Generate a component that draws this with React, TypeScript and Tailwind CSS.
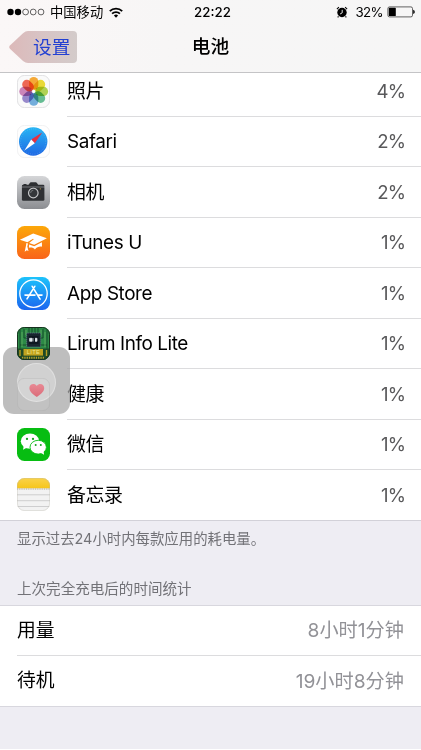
import type { ReactNode } from "react";

const PETALS = [
  "#f9a21c",
  "#ecd91c",
  "#a9d03c",
  "#52b788",
  "#62a6dc",
  "#8c7cc8",
  "#c878b4",
  "#f0553f",
];

const PhotosIcon = () => (
  <svg viewBox="0 0 33 33" className="size-[33px]">
    <rect x=".4" y=".4" width="32.2" height="32.2" rx="7.2" fill="#fafafa" stroke="#d9d9dc" strokeWidth=".8" />
    {PETALS.map((color, i) => (
      <rect
        key={color}
        x="12.1"
        y="2"
        width="9.2"
        height="12.8"
        rx="4.6"
        fill={color}
        fillOpacity=".88"
        className="mix-blend-multiply"
        transform={`rotate(${i * 45} 16.7 16.4)`}
      />
    ))}
    <circle cx="16.7" cy="16.4" r="1.1" fill="#fff" />
  </svg>
);

const SafariIcon = () => (
  <svg viewBox="0 0 33 33" className="size-[33px]">
    <defs>
      <linearGradient id="safari" x1="0" y1="0" x2="0" y2="1">
        <stop offset="0" stopColor="#26b5f4" />
        <stop offset="1" stopColor="#1f68e4" />
      </linearGradient>
    </defs>
    <rect x=".4" y=".4" width="32.2" height="32.2" rx="7.2" fill="#fefefe" stroke="#ebebed" strokeWidth=".7" />
    <circle cx="16.2" cy="16.5" r="14.2" fill="url(#safari)" />
    <circle cx="16.2" cy="16.5" r="12.6" fill="none" stroke="#a4d7fa" strokeWidth="1" strokeDasharray=".4 1.8" opacity=".6" />
    <path d="M25.2 7.6 14.2 14.6l3.6 3.6z" fill="#e8303f" />
    <path d="m14.2 14.6 3.6 3.6L7.4 25.4z" fill="#fff" />
  </svg>
);

const CameraIcon = () => (
  <svg viewBox="0 0 33 33" className="size-[33px]">
    <defs>
      <linearGradient id="camera" x1="0" y1="0" x2="0" y2="1">
        <stop offset="0" stopColor="#d5d6d8" />
        <stop offset="1" stopColor="#8b8d91" />
      </linearGradient>
    </defs>
    <rect width="33" height="33" rx="7.5" fill="url(#camera)" />
    <path d="M6.5 7.9h3v1h-3zM11.5 8.8l1.3-1.9q.4-.6 1.1-.6h4.9q.7 0 1.1.6l1.3 1.9H26q1.4 0 1.4 1.2v.7H4.9V10q0-1.2 1.4-1.2z" fill="#2e3033" />
    <path d="M4.9 11.2h22.5v12.2q0 1.3-1.3 1.3H6.2q-1.3 0-1.3-1.3z" fill="#2e3033" />
    <circle cx="16.3" cy="16.8" r="5.9" fill="#2e3033" />
    <circle cx="16.3" cy="17" r="4.8" fill="#34373a" stroke="#c4c5c7" strokeWidth="1.2" />
    <path d="M13.6 17a2.7 2.7 0 0 1 2.7-2.7" fill="none" stroke="#8d9094" strokeWidth=".7" />
    <circle cx="23.3" cy="12.8" r=".6" fill="#c9a44a" />
  </svg>
);

const ITunesUIcon = () => (
  <svg viewBox="0 0 33 33" className="size-[33px]">
    <defs>
      <linearGradient id="itunesu" x1="0" y1="0" x2="0" y2="1">
        <stop offset="0" stopColor="#fca809" />
        <stop offset="1" stopColor="#f9641a" />
      </linearGradient>
    </defs>
    <rect width="33" height="33" rx="7.5" fill="url(#itunesu)" />
    <path d="m2.9 13.7 13.3-6.3 13.7 4.9-12.7 6.5-5.1-1.8 4.7-3.7-.8-.5-5.6 3.5z" fill="#fff" />
    <path d="m9.4 17 1.6.6-.7 2.8 1.2 4.5-1.8-.6-2 1.4 1.2-5.6z" fill="#fff" />
    <path d="m12.1 18.4 5.1 1.8 7.7-3.9.1 4.4c-2.5-.4-5.2.3-7.1 2.7-1.4-1.6-3.6-2.2-6-1.6z" fill="#fff" />
  </svg>
);

const AppStoreIcon = () => (
  <svg viewBox="0 0 33 33" className="size-[33px]">
    <defs>
      <linearGradient id="appstore" x1="0" y1="0" x2="0" y2="1">
        <stop offset="0" stopColor="#1dc3fb" />
        <stop offset="1" stopColor="#1b65ef" />
      </linearGradient>
    </defs>
    <rect width="33" height="33" rx="7.5" fill="url(#appstore)" />
    <circle cx="16.5" cy="16.6" r="13.7" fill="none" stroke="#fff" strokeWidth="1.3" />
    <g fill="none" stroke="#fff" strokeWidth="1.6" strokeLinecap="round">
      <path d="m15.2 9.3 7.9 12.8M17.8 9.3 10 21.8M8 18.1h10M21.4 18.1h3.6" />
    </g>
  </svg>
);

const LirumIcon = () => (
  <svg viewBox="0 0 33 33" className="relative z-30 size-[33px]">
    <defs>
      <clipPath id="lirum">
        <rect width="33" height="33" rx="7.5" />
      </clipPath>
    </defs>
    <g clipPath="url(#lirum)">
      <rect width="33" height="33" fill="#2c8a46" />
      <g fill="none" stroke="#154d2b" strokeWidth="1">
        <path d="M3 3v20h5M30 3v20h-5M7 2v9h4M26 2v9h-4M12 0v6M15 0v6M18 0v6M21 0v6M3 18h6M24 18h6" />
      </g>
      <path d="M5 5v15M28 5v15M9 3v5M24 3v5" stroke="#64ae62" strokeWidth=".8" />
      <rect x="9.7" y="6" width="14" height="14" rx="1" fill="#18252e" stroke="#668090" strokeWidth="1" strokeDasharray="1 1" />
      <rect x="12" y="9" width="9.5" height="8" fill="#0e1720" />
      <path d="M15 11.3h-2.4v3H15zM16 11v3.5M18 11.3h2v3h-2" stroke="#e8edf0" strokeWidth=".7" fill="#dbe3e8" />
      <rect y="21.5" width="33" height="11.5" fill="#1f4a26" />
      <rect x="6.5" y="22" width="19.5" height="6.6" fill="#c0a31f" />
      <path d="M3 23v6M29.5 23v6" stroke="#b59c22" strokeWidth="1.4" />
      <path d="M5 30.7h23" stroke="#b7a02b" strokeWidth="2.1" strokeDasharray="1.3 1" />
      <text x="16.5" y="27.3" textAnchor="middle" fontSize="5.6" letterSpacing=".4" fill="#f4e787" fontFamily="Liberation Sans, sans-serif">
        LITE
      </text>
    </g>
    <rect x=".5" y=".5" width="32" height="32" rx="7" fill="none" stroke="#17301f" />
  </svg>
);

const HealthIcon = () => (
  <svg viewBox="0 0 33 33" className="relative z-30 size-[33px]">
    <defs>
      <linearGradient id="heart" x1="0" y1="0" x2="0" y2="1">
        <stop offset="0" stopColor="#e88994" />
        <stop offset="1" stopColor="#db6c79" />
      </linearGradient>
    </defs>
    <rect x=".4" y=".4" width="32.2" height="32.2" rx="7.2" fill="#fff" fillOpacity=".07" stroke="#aaa" strokeOpacity=".45" strokeWidth=".7" />
    <path
      d="M19.8 18.9c-3.7-2.4-7.4-5.1-7.4-8.9 0-4.2 5.2-5.3 7.4-2 2.2-3.3 7.4-2.2 7.4 2 0 3.8-3.7 6.5-7.4 8.9z"
      fill="url(#heart)"
    />
  </svg>
);

const WeChatIcon = () => (
  <svg viewBox="0 0 33 33" className="size-[33px]">
    <rect width="33" height="33" rx="7.5" fill="#07bd12" />
    <ellipse cx="13" cy="13.2" rx="9.2" ry="7.6" fill="#fff" />
    <path d="m6.8 17.8-.8 4 4.2-2.3z" fill="#fff" />
    <ellipse cx="21.2" cy="19.2" rx="8.2" ry="6.9" fill="#fff" stroke="#07bd12" strokeWidth=".9" />
    <path d="m23.6 24.8 3.5 1.9-.6-3.7z" fill="#fff" />
    <g fill="#13a51d">
      <circle cx="10" cy="10.9" r="1.15" />
      <circle cx="16" cy="10.9" r="1.15" />
      <circle cx="18.7" cy="17.1" r="1" />
      <circle cx="23.8" cy="17.1" r="1" />
    </g>
  </svg>
);

const NotesIcon = () => (
  <svg viewBox="0 0 33 33" className="size-[33px]">
    <defs>
      <clipPath id="notes">
        <rect width="33" height="33" rx="7.5" />
      </clipPath>
      <linearGradient id="notes-top" x1="0" y1="0" x2="0" y2="1">
        <stop offset="0" stopColor="#fad34b" />
        <stop offset="1" stopColor="#f6c51b" />
      </linearGradient>
    </defs>
    <g clipPath="url(#notes)">
      <rect width="33" height="33" fill="#f2f2f2" />
      <rect width="33" height="10.3" fill="url(#notes-top)" />
      <path d="M0 11h33" stroke="#a8a49a" strokeWidth="1" strokeDasharray="1 .8" />
      <path d="M0 16.8h33M0 22.7h33M0 28.5h33" stroke="#c9c9cb" strokeWidth=".9" />
    </g>
    <rect x=".4" y=".4" width="32.2" height="32.2" rx="7.2" fill="none" stroke="#b9b6ab" strokeOpacity=".5" strokeWidth=".7" />
  </svg>
);

type AppUsage = { name: string; percent: string; icon: ReactNode };

const apps: AppUsage[] = [
  { name: "照片", percent: "4%", icon: <PhotosIcon /> },
  { name: "Safari", percent: "2%", icon: <SafariIcon /> },
  { name: "相机", percent: "2%", icon: <CameraIcon /> },
  { name: "iTunes U", percent: "1%", icon: <ITunesUIcon /> },
  { name: "App Store", percent: "1%", icon: <AppStoreIcon /> },
  { name: "Lirum Info Lite", percent: "1%", icon: <LirumIcon /> },
  { name: "健康", percent: "1%", icon: <HealthIcon /> },
  { name: "微信", percent: "1%", icon: <WeChatIcon /> },
  { name: "备忘录", percent: "1%", icon: <NotesIcon /> },
];

const StatusBar = () => (
  <div className="grid h-6 grid-cols-[1fr_auto_1fr] items-center pr-[6px] pl-[7px] text-[13.3px] leading-6 text-black">
    <div className="flex items-center">
      <svg viewBox="0 0 38 8" className="h-2 w-[38px]">
        <circle cx="3.5" cy="4" r="3.2" />
        <circle cx="11" cy="4" r="3.2" />
        <g fill="none" stroke="#222" strokeWidth=".7">
          <circle cx="18.6" cy="4" r="2.9" />
          <circle cx="26.2" cy="4" r="2.9" />
          <circle cx="34" cy="4" r="2.9" />
        </g>
      </svg>
      <span className="ml-[5px]">中国移动</span>
      <svg viewBox="0 0 14 11" className="ml-[6px] h-[11px] w-[14px]">
        <g fill="none" stroke="#000" strokeWidth="1.8">
          <path d="M.8 4.2a8.8 8.8 0 0 1 12.4 0" />
          <path d="M3.1 6.7a5.5 5.5 0 0 1 7.8 0" />
        </g>
        <path d="M7 10.7 4.9 8.6a3 3 0 0 1 4.2 0z" />
      </svg>
    </div>
    <span className="pl-[3px] font-medium">22:22</span>
    <div className="flex items-center justify-end">
      <svg viewBox="0 0 12 12" className="mr-[7px] size-3">
        <circle cx="6" cy="6.5" r="4.7" />
        <path d="M.9 3.1 2.9 1.2M11.1 3.1 9.1 1.2M2.5 10.3l-.8 1M9.5 10.3l.8 1" stroke="#000" strokeWidth="1.1" />
        <path d="M6.2 3.8v3L4.1 8" fill="none" stroke="#fff" strokeWidth=".9" />
      </svg>
      <span className="tracking-[-0.6px]">32%</span>
      <svg viewBox="0 0 28 12" className="ml-[4px] h-3 w-7">
        <rect x=".9" y=".9" width="24.6" height="10" rx="1.6" fill="none" stroke="#222" strokeWidth=".7" />
        <rect x="1.8" y="1.8" width="7" height="8.2" rx=".6" />
        <path d="M26.2 3.8q1.6.5 1.6 2.1t-1.6 2.1z" />
      </svg>
    </div>
  </div>
);

const Header = () => (
  <header className="relative z-10 h-[73px] shrink-0 border-b border-[#c4c4c6] bg-linear-to-r from-[#fbf7f7] via-[#f7f6f6] via-40% to-[#f6f6f6]">
    <StatusBar />
    <nav className="grid h-[46px] grid-cols-[1fr_auto_1fr] items-center">
      <button className="relative ml-[9px] flex h-[32px] w-[68px] items-center">
        <svg viewBox="0 0 68 32" className="absolute inset-0 h-8 w-[68px]">
          <defs>
            <linearGradient id="back" x1="0" x2="1">
              <stop offset="0" stopColor="#dcb9b9" />
              <stop offset=".45" stopColor="#d8c3c4" />
              <stop offset="1" stopColor="#d3cbca" />
            </linearGradient>
          </defs>
          <path d="M1.2 14.2 14 2.2Q16.5 0 19 0h45q4 0 4 4v24q0 4-4 4H19q-2.5 0-5-2L1.2 18q-2-1.9 0-3.8z" fill="url(#back)" />
        </svg>
        <span className="relative ml-[24px] pt-px text-[18.7px] leading-8 text-[#2340d2]">设置</span>
      </button>
      <h1 className="pt-px text-[18.7px] font-medium text-black">电池</h1>
    </nav>
  </header>
);

const AppRow = ({ app }: { app: AppUsage }) => (
  <li className="group flex h-[50.5px] items-center pl-[17px] last:h-[49.5px]">
    {app.icon}
    <div className="ml-[17px] flex h-full flex-1 items-center justify-between border-b border-[#dcdcde] pt-[2px] pr-4 group-last:border-0">
      <span className="text-[18.9px] tracking-[-0.4px] text-black">{app.name}</span>
      <span className="text-[18.6px] tracking-[-0.9px] text-[#59595b]">{app.percent}</span>
    </div>
  </li>
);

const AssistiveTouch = () => (
  <div className="absolute top-[347px] left-[3px] z-20 flex size-[67px] justify-center rounded-[11px] bg-[#a8a8a8]/75 pt-4">
    <div className="size-[39px] rounded-full border border-white/30 bg-white/30" />
  </div>
);

export default function App() {
  return (
    <div className="relative flex h-[750px] w-[421px] flex-col overflow-hidden bg-[#eeedf3] font-['Inter','Noto_Sans_CJK_SC',sans-serif]">
      <Header />
      <main className="-mt-[7px] flex flex-1 flex-col">
        <ul className="border-b border-[#d2d1d8] bg-white">
          {apps.map((app) => (
            <AppRow key={app.name} app={app} />
          ))}
        </ul>
        <p className="h-[55px] pt-[7px] pl-[17px] text-[14.4px] leading-[22px] text-[#727277]">
          显示过去24小时内每款应用的耗电量。
        </p>
        <h2 className="h-[29px] pt-[2px] pl-[17px] text-[14.55px] leading-[22px] text-[#727277]">上次完全充电后的时间统计</h2>
        <dl className="border-y border-[#d8d7de] bg-white pl-[17px] text-[18.8px]">
          <div className="flex h-[50.5px] items-center justify-between border-b border-[#dcdcde] pt-px pr-[17px]">
            <dt className="text-black">用量</dt>
            <dd className="text-[19.2px] text-[#929297]">8小时1分钟</dd>
          </div>
          <div className="flex h-[50px] items-center justify-between pt-px pr-[17px]">
            <dt className="text-black">待机</dt>
            <dd className="text-[19.2px] text-[#929297]">19小时8分钟</dd>
          </div>
        </dl>
      </main>
      <div className="h-[1.5px] bg-white" />
      <AssistiveTouch />
    </div>
  );
}
